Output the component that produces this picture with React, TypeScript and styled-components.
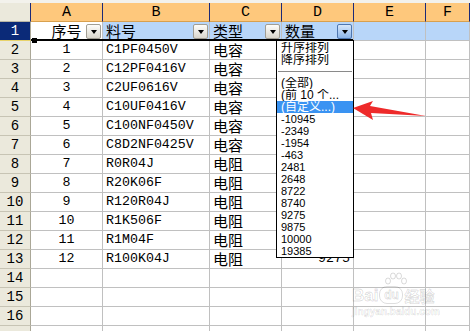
import React from "react";
import styled, { createGlobalStyle, css } from "styled-components";

const GlobalStyle = createGlobalStyle`
  html, body { margin: 0; padding: 0; background: #fff; overflow: hidden; }
`;

const COLS = "31px 72px 107px 72px 72px 72px 1fr";

const Sheet = styled.div`
  position: relative;
  width: 470px;
  height: 331px;
  overflow: hidden;
  background: #fff;
`;

const TopStrip = styled.div`
  height: 3px;
  background: #f3f2ec;
`;

const Row = styled.div`
  display: grid;
  grid-template-columns: ${COLS};
  height: 19px;
`;

const Corner = styled.div`
  background: #ebe9dc;
  border-right: 1px solid #1c2a78;
  border-bottom: 1px solid #b9b6a6;
`;

const ColHead = styled.div`
  background: #fec87c;
  border-right: 1px solid #1c2a78;
  border-bottom: 1px solid #d8a04e;
  display: flex;
  align-items: center;
  justify-content: center;
  font: 15px/15px "Liberation Mono", monospace;
  color: #000;
`;

const RowHead = styled.div<{ $active?: boolean }>`
  background: ${(p) => (p.$active ? "#0b2a78" : "#ebe9dc")};
  color: ${(p) => (p.$active ? "#fff" : "#000")};
  border-right: 1px solid #aaa797;
  border-bottom: 1px solid ${(p) => (p.$active ? "#e8d36a" : "#c7c4b4")};
  display: flex;
  align-items: flex-end;
  justify-content: center;
  padding-bottom: 2px;
  font: 14px/14px "Liberation Mono", monospace;
`;

const Cell = styled.div<{ $align?: "left" | "center" | "right"; $cjk?: boolean; $bg?: string }>`
  position: relative;
  min-width: 0;
  background: ${(p) => p.$bg ?? "#fff"};
  border-right: 1px solid #c0c0c0;
  border-bottom: 1px solid #c0c0c0;
  display: flex;
  align-items: flex-end;
  justify-content: ${(p) =>
    p.$align === "center" ? "center" : p.$align === "right" ? "flex-end" : "flex-start"};
  padding: 0 3px 2px 3px;
  white-space: nowrap;
  color: #000;
  ${(p) =>
    p.$cjk
      ? css`
          font: 15px/15px "Noto Sans CJK SC", sans-serif;
        `
      : css`
          font: 13.3px/14px "Liberation Mono", monospace;
        `}
`;

const FilterBtn = styled.span<{ $active?: boolean }>`
  position: absolute;
  right: 1px;
  top: 2px;
  width: 15px;
  height: 15px;
  box-sizing: border-box;
  border: 1px solid ${(p) => (p.$active ? "#4f77b0" : "#a19e94")};
  border-radius: 2px;
  background: ${(p) =>
    p.$active
      ? "linear-gradient(#d6e7fc, #8cb5e8)"
      : "linear-gradient(#fdfdfb, #d9d6cc)"};
  display: flex;
  align-items: center;
  justify-content: center;
  &::after {
    content: "";
    width: 0;
    height: 0;
    border-left: 3.5px solid transparent;
    border-right: 3.5px solid transparent;
    border-top: 4px solid #000;
    margin-top: 1px;
  }
`;

const SelLine = styled.div`
  position: absolute;
  left: 31px;
  top: 39px;
  width: 322px;
  height: 2px;
  background: #000;
`;

const FillHandle = styled.div`
  position: absolute;
  left: 32px;
  top: 38px;
  width: 5px;
  height: 5px;
  background: #000;
`;

const DropList = styled.div`
  position: absolute;
  left: 276px;
  top: 40px;
  width: 78px;
  height: 218px;
  box-sizing: border-box;
  border: 1px solid #000;
  background: #fff;
  padding-top: 1px;
  display: flex;
  flex-direction: column;
`;

const ListItem = styled.div<{ $sel?: boolean; $cjk?: boolean }>`
  height: 12px;
  flex: none;
  line-height: 12px;
  padding-left: 4px;
  white-space: nowrap;
  overflow: hidden;
  background: ${(p) => (p.$sel ? "#3a93f2" : "transparent")};
  color: ${(p) => (p.$sel ? "#fff" : "#000")};
  font-family: "Liberation Sans", "Noto Sans CJK SC", sans-serif;
  font-size: ${(p) => (p.$cjk ? "12px" : "11px")};
`;

const ListSep = styled.div`
  height: 11px;
  flex: none;
  display: flex;
  align-items: center;
  &::before {
    content: "";
    flex: 1;
    height: 1px;
    background: #8a8a8a;
    margin: 0 1px;
  }
`;

const Arrow = styled.svg`
  position: absolute;
  left: 350px;
  top: 98px;
`;

const Watermark = styled.div`
  position: absolute;
  left: 352px;
  top: 272px;
  display: flex;
  flex-direction: column;
  align-items: flex-start;
  color: transparent;
  -webkit-text-stroke: 0.8px rgba(0, 0, 0, 0.15);
`;

const WmLogo = styled.div`
  position: relative;
  display: flex;
  align-items: flex-end;
  gap: 1px;
  padding-top: 14px;
  font: bold 17px/17px "Liberation Sans", sans-serif;
`;

const WmDu = styled.span`
  display: inline-flex;
  align-items: center;
  justify-content: center;
  width: 22px;
  height: 16px;
  border-radius: 8px;
  border: 1px solid rgba(0, 0, 0, 0.13);
  font: bold 12px/12px "Liberation Sans", sans-serif;
`;

const WmCjk = styled.span`
  font: bold 15px/17px "Noto Sans CJK SC", sans-serif;
`;

const WmUrl = styled.div`
  margin-top: 3px;
  font: bold 10px/10px "Liberation Sans", sans-serif;
  -webkit-text-stroke: 0.6px rgba(0, 0, 0, 0.14);
`;

const Paw = styled.svg`
  position: absolute;
  left: 31px;
  top: 0px;
`;

const data: [number, string, string][] = [
  [1, "C1PF0450V", "电容"],
  [2, "C12PF0416V", "电容"],
  [3, "C2UF0616V", "电容"],
  [4, "C10UF0416V", "电容"],
  [5, "C100NF0450V", "电容"],
  [6, "C8D2NF0425V", "电容"],
  [7, "R0R04J", "电阻"],
  [8, "R20K06F", "电阻"],
  [9, "R120R04J", "电阻"],
  [10, "R1K506F", "电阻"],
  [11, "R1M04F", "电阻"],
  [12, "R100K04J", "电阻"],
];

const listValues = [
  "-10945", "-2349", "-1954", "-463", "2481", "2648", "8722",
  "8740", "9275", "9875", "10000", "19385",
];

const SEL_BG = "#b8d6f9";

export default function App() {
  return (
    <Sheet>
      <GlobalStyle />
      <TopStrip />
      <Row>
        <Corner />
        {["A", "B", "C", "D", "E", "F"].map((c) => (
          <ColHead key={c}>{c}</ColHead>
        ))}
      </Row>
      <Row>
        <RowHead $active>1</RowHead>
        <Cell $cjk $align="center">
          序号
          <FilterBtn />
        </Cell>
        <Cell $cjk $bg={SEL_BG}>
          料号
          <FilterBtn />
        </Cell>
        <Cell $cjk $bg={SEL_BG}>
          类型
          <FilterBtn />
        </Cell>
        <Cell $cjk $bg={SEL_BG}>
          数量
          <FilterBtn $active />
        </Cell>
        <Cell $bg={SEL_BG} />
        <Cell $bg={SEL_BG} />
      </Row>
      {data.map(([n, code, kind], i) => (
        <Row key={n}>
          <RowHead>{i + 2}</RowHead>
          <Cell $align="center">{n}</Cell>
          <Cell>{code}</Cell>
          <Cell $cjk>{kind}</Cell>
          <Cell $align="right">{i === 11 ? "9275" : ""}</Cell>
          <Cell />
          <Cell />
        </Row>
      ))}
      {[14, 15, 16, 17].map((r) => (
        <Row key={r}>
          <RowHead>{r < 17 ? r : ""}</RowHead>
          <Cell />
          <Cell />
          <Cell />
          <Cell />
          <Cell />
          <Cell />
        </Row>
      ))}

      <SelLine />
      <FillHandle />

      <DropList>
        <ListItem $cjk>升序排列</ListItem>
        <ListItem $cjk>降序排列</ListItem>
        <ListSep />
        <ListItem $cjk>(全部)</ListItem>
        <ListItem $cjk>(前 10 个...</ListItem>
        <ListItem $cjk $sel>(自定义...)</ListItem>
        {listValues.map((v) => (
          <ListItem key={v}>{v}</ListItem>
        ))}
      </DropList>

      <Arrow width="80" height="25" viewBox="0 0 80 25">
        <polygon points="3,10 23,3 20,8 76,18 21,15 23,22" fill="#ee2a2a" />
      </Arrow>

      <Watermark>
        <WmLogo>
          <span>Bai</span>
          <WmDu>du</WmDu>
          <WmCjk>经验</WmCjk>
          <Paw width="26" height="15" viewBox="0 0 26 15">
            <g fill="none" stroke="rgba(0,0,0,0.15)" strokeWidth="1">
              <ellipse cx="5" cy="9" rx="2.5" ry="3" />
              <ellipse cx="10" cy="4" rx="2.5" ry="3" />
              <ellipse cx="16" cy="4" rx="2.5" ry="3" />
              <ellipse cx="21" cy="9" rx="2.5" ry="3" />
            </g>
          </Paw>
        </WmLogo>
        <WmUrl>jingyan.baidu.com</WmUrl>
      </Watermark>
    </Sheet>
  );
}
